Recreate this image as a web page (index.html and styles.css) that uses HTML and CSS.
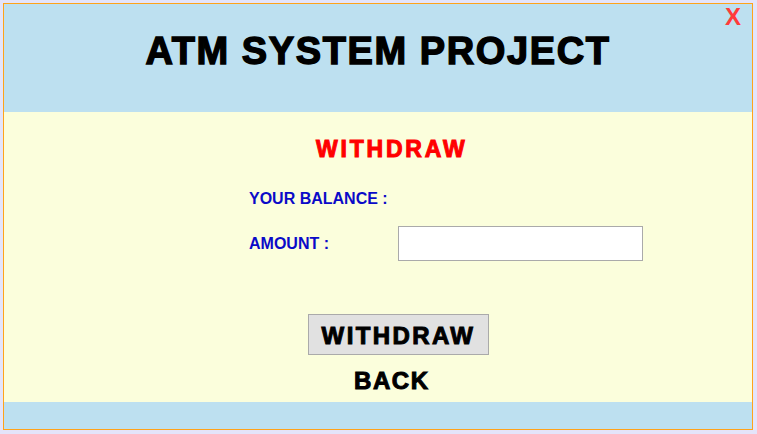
FILE: index.html
```html
<!DOCTYPE html>
<html>
<head>
<meta charset="utf-8">
<link rel="stylesheet" href="styles.css">
</head>
<body>
<div class="frame">
  <header class="header">
    <h1 class="title">ATM SYSTEM PROJECT</h1>
    <span class="close">X</span>
  </header>
  <main class="main">
    <h2 class="heading">WITHDRAW</h2>
    <div class="form">
      <label class="label">YOUR BALANCE :</label>
      <span class="value"></span>
      <label class="label">AMOUNT :</label>
      <input class="input" type="text">
    </div>
    <button class="btn">WITHDRAW</button>
    <div class="back">BACK</div>
  </main>
  <footer class="footer"></footer>
</div>
</body>
</html>
```

FILE: styles.css
```css
html, body {
  margin: 0;
  padding: 0;
  background: #e4e4fa;
  font-family: "Liberation Sans", Arial, sans-serif;
}
.frame {
  margin: 3px 0 0 3px;
  width: 750px;
  height: 427px;
  box-sizing: border-box;
  border: 1px solid #ffa31a;
  display: flex;
  flex-direction: column;
}
.header {
  position: relative;
  height: 108px;
  background: #bde0f0;
  box-sizing: border-box;
  padding-top: 28px;
}
.title {
  margin: 0;
  font-size: 38px;
  line-height: 38px;
  font-weight: bold;
  text-align: center;
  color: #000;
  letter-spacing: 1.6px;
  -webkit-text-stroke: 1.4px #000;
}
.close {
  position: absolute;
  top: 1px;
  right: 11px;
  font-size: 24px;
  line-height: 24px;
  font-weight: bold;
  color: #ff3b3b;
}
.main {
  height: 290px;
  background: #fbfedc;
  box-sizing: border-box;
  padding-top: 26px;
  display: flex;
  flex-direction: column;
  align-items: flex-start;
}
.heading {
  margin: 0 0 0 312px;
  font-size: 23px;
  line-height: 23px;
  font-weight: bold;
  color: #ff0000;
  letter-spacing: 2.8px;
  -webkit-text-stroke: 1px #ff0000;
}
.form {
  margin: 30px 0 0 245px;
  display: grid;
  grid-template-columns: 149px 245px;
  grid-template-rows: 16px 35px;
  row-gap: 19px;
  align-items: center;
}
.label {
  font-size: 16px;
  line-height: 16px;
  font-weight: bold;
  color: #0a0ac8;
}
.input {
  box-sizing: border-box;
  width: 245px;
  height: 35px;
  margin: 0;
  border: 1px solid #aaaaaa;
  background: #fff;
  outline: none;
}
.btn {
  margin: 53px 0 0 304px;
  box-sizing: border-box;
  width: 181px;
  height: 41px;
  padding: 9px 0 6px;
  border: 1px solid #aaaaaa;
  background: #e1e1e1;
  font-family: "Liberation Sans", Arial, sans-serif;
  font-size: 24px;
  line-height: 24px;
  font-weight: bold;
  color: #000;
  letter-spacing: 2.4px;
  -webkit-text-stroke: 1px #000;
  text-align: center;
}
.back {
  margin: 14px 0 0 350px;
  font-size: 24px;
  line-height: 24px;
  font-weight: bold;
  color: #000;
  letter-spacing: 1.6px;
  -webkit-text-stroke: 1px #000;
}
.footer {
  flex: 1;
  background: #bde0f0;
}
```
